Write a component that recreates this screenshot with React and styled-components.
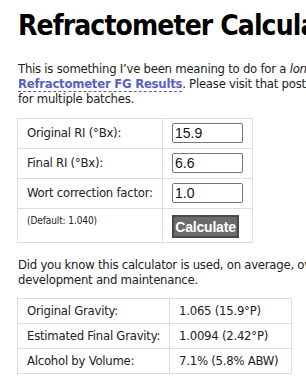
import React from "react";
import styled, { createGlobalStyle } from "styled-components";

const Global = createGlobalStyle`
  html, body { margin: 0; padding: 0; background: #fff; overflow: hidden; }
  body { font-family: "DejaVu Sans Condensed", "DejaVu Sans", sans-serif; color: #222; }
`;

const Page = styled.div`
  padding: 0 0 0 18px;
  width: 700px;
`;

const Title = styled.h1`
  margin: 9px 0 0 0;
  font-size: 28px;
  line-height: 34px;
  font-weight: bold;
  letter-spacing: -0.9px;
  color: #000;
  white-space: nowrap;
`;

const Para = styled.p`
  margin: ${(p) => p.$mt || 0}px 0 0 0;
  font-size: 13px;
  line-height: 15px;
  letter-spacing: -0.25px;
  white-space: nowrap;
`;

const Link = styled.a`
  color: #5b5fc0;
  font-weight: bold;
  text-decoration: none;
  border-bottom: 1px dashed #5b5fc0;
`;

const Table = styled.table`
  border-collapse: collapse;
  margin: ${(p) => p.$mt}px 0 0 -1px;
  font-size: 13px;
  letter-spacing: -0.25px;
`;

const Cell = styled.td`
  border: 1px solid #ddd;
  padding: ${(p) => p.$pad || "4px 9px 5px"};
  vertical-align: ${(p) => (p.$top ? "top" : "middle")};
  width: ${(p) => p.$w}px;
  line-height: ${(p) => p.$lh || 16}px;
  white-space: nowrap;
`;

const Small = styled.span`
  display: block;
  margin-top: 2px;
  font-size: 10px;
  line-height: 12px;
  letter-spacing: -0.1px;
`;

const Input = styled.input`
  box-sizing: border-box;
  display: block;
  width: 71px;
  height: 20px;
  margin: 0;
  padding: 0 2px;
  border: 1px solid #767676;
  border-radius: 2px;
  font-family: "Liberation Sans", Arial, sans-serif;
  font-size: 14px;
  color: #111;
`;

const Button = styled.button`
  box-sizing: border-box;
  display: block;
  width: 67px;
  height: 23px;
  margin: 1px 0 0 0;
  padding: 0;
  background: #6b6b6b;
  border: 2px solid #4a4a4a;
  color: #fff;
  font-family: "Liberation Sans", Arial, sans-serif;
  font-weight: bold;
  font-size: 14px;
  letter-spacing: -0.2px;
  white-space: nowrap;
`;

const inputs = [
  ["Original RI (°Bx):", "15.9"],
  ["Final RI (°Bx):", "6.6"],
  ["Wort correction factor:", "1.0"],
];

const results = [
  ["Original Gravity:", "1.065 (15.9°P)"],
  ["Estimated Final Gravity:", "1.0094 (2.42°P)"],
  ["Alcohol by Volume:", "7.1% (5.8% ABW)"],
];

export default function App() {
  return (
    <Page>
      <Global />
      <Title>Refractometer Calculator</Title>
      <Para $mt={18}>
        This is something I’ve been meaning to do for a <em>long</em> time, ever since I wrote about
        <br />
        <Link href="#">Refractometer FG Results</Link>. Please visit that post for more details on the formulas I tested
        <br />
        for multiple batches.
      </Para>
      <Table $mt={12}>
        <tbody>
          {inputs.map(([label, val]) => (
            <tr key={label}>
              <Cell $w={126}>{label}</Cell>
              <Cell $w={70}>
                <Input defaultValue={val} />
              </Cell>
            </tr>
          ))}
          <tr>
            <Cell $w={126} $top $pad="4px 9px 4px">
              <Small>(Default: 1.040)</Small>
            </Cell>
            <Cell $w={70} $pad="5px 9px 4px">
              <Button>Calculate</Button>
            </Cell>
          </tr>
        </tbody>
      </Table>
      <Para $mt={14}>
        Did you know this calculator is used, on average, over a thousand times a month? Please consider supporting its
        <br />
        development and maintenance.
      </Para>
      <Table $mt={11}>
        <tbody>
          {results.map(([label, val]) => (
            <tr key={label}>
              <Cell $w={126} $pad="4px 9px" $lh={16}>{label}</Cell>
              <Cell $w={103} $pad="4px 9px" $lh={16}>{val}</Cell>
            </tr>
          ))}
        </tbody>
      </Table>
    </Page>
  );
}
